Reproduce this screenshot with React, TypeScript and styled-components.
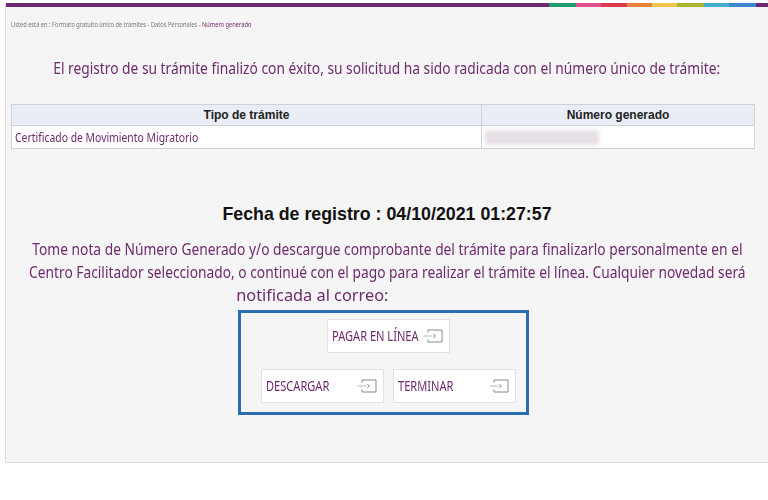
import * as React from 'react'
import styled, { createGlobalStyle } from 'styled-components'

const GlobalStyle = createGlobalStyle`
    html, body {
        margin: 0;
        padding: 0;
        background: #ffffff;
    }
`

// the site uses a condensed humanist face; Noto Sans squeezed horizontally is the closest we have
const humanist = `"Noto Sans", "Open Sans", sans-serif`
const purple = '#6e2a6e'

const stripes = [
    { color: '#1f9c6c', width: 27 },
    { color: '#e2508c', width: 25 },
    { color: '#dc3a4a', width: 26 },
    { color: '#e8813a', width: 25 },
    { color: '#f2c54a', width: 25 },
    { color: '#a9b52e', width: 27 },
    { color: '#45aecd', width: 25 },
    { color: '#3d87cf', width: 27 },
]

type ActionProps = { label: string }

function EnterIcon() {
    return (
        <svg width="20" height="16" viewBox="0 0 20 16" fill="none">
            <path d="M5 4.5V2H19V14H5V11.5" stroke="#8a8a8a" strokeWidth="1" />
            <path d="M0.5 8H9.5" stroke="#b5b5b5" strokeWidth="1" />
            <path d="M10.5 6.2L12.3 8L10.5 9.8" stroke="#777" strokeWidth="1" />
        </svg>
    )
}

function Action({ label }: ActionProps) {
    return (
        <ActionButton>
            <ActionLabel>
                <Squeeze $x={0.82}>{label}</Squeeze>
            </ActionLabel>
            <EnterIcon />
        </ActionButton>
    )
}

export default function App(): React.ReactElement {
    return (
        <>
            <GlobalStyle />
            <Page>
                <Panel>
                    <TopBar>
                        <BarFill />
                        {stripes.map((s) => (
                            <BarStripe key={s.color} style={{ width: s.width, background: s.color }} />
                        ))}
                        <BarEnd />
                    </TopBar>
                    <Breadcrumb>
                        <Squeeze $x={0.76}>
                            Usted está en : Formato gratuito único de trámites - Datos Personales -{' '}
                            <span>Número generado</span>
                        </Squeeze>
                    </Breadcrumb>
                    <Heading>
                        <Squeeze $x={0.81} $origin="center">
                            El registro de su trámite finalizó con éxito, su solicitud ha sido
                            radicada con el número único de trámite:
                        </Squeeze>
                    </Heading>
                    <ResultTable>
                        <thead>
                            <tr>
                                <th>Tipo de trámite</th>
                                <th>Número generado</th>
                            </tr>
                        </thead>
                        <tbody>
                            <tr>
                                <td>
                                    <Squeeze $x={0.8}>Certificado de Movimiento Migratorio</Squeeze>
                                </td>
                                <td>
                                    <Blurred />
                                </td>
                            </tr>
                        </tbody>
                    </ResultTable>
                    <DateLine>Fecha de registro : 04/10/2021 01:27:57</DateLine>
                    <Notice>
                        <Squeeze $x={0.81} $origin="center">
                            Tome nota de Número Generado y/o descargue comprobante del trámite para
                            finalizarlo personalmente en el
                        </Squeeze>
                        <Squeeze $x={0.81} $origin="center">
                            Centro Facilitador seleccionado, o continué con el pago para realizar el
                            trámite el línea. Cualquier novedad será
                        </Squeeze>
                        <LastLine $x={0.96} $origin="center">
                            notificada al correo:
                        </LastLine>
                    </Notice>
                    <ActionBox>
                        <ActionRow>
                            <Action label="PAGAR EN LÍNEA" />
                        </ActionRow>
                        <ActionRow>
                            <Action label="DESCARGAR" />
                            <Action label="TERMINAR" />
                        </ActionRow>
                    </ActionBox>
                </Panel>
            </Page>
        </>
    )
}

const Squeeze = styled.span<{ $x: number; $origin?: string }>`
    display: inline-block;
    white-space: nowrap;
    transform: scaleX(${(p) => p.$x});
    transform-origin: ${(p) => p.$origin ?? 'left center'};
`

const LastLine = styled(Squeeze)`
    margin-right: 150px;
`

const Page = styled.div`
    padding: 3px 0 0 5px;
    height: 500px;
    box-sizing: border-box;
    overflow: hidden;
`

const Panel = styled.div`
    background: #f5f5f5;
    border-left: 1px solid #dcdcdc;
    border-bottom: 1px solid #dcdcdc;
    height: 460px;
    box-sizing: border-box;
    display: flex;
    flex-direction: column;
`

const TopBar = styled.div`
    display: flex;
    height: 4px;
    flex-shrink: 0;
`

const BarFill = styled.div`
    flex: 1;
    background: #6b2a70;
`

const BarStripe = styled.div`
    flex-shrink: 0;
`

const BarEnd = styled.div`
    width: 12px;
    background: #6b2a70;
`

const Breadcrumb = styled.div`
    margin: 12px 0 0 5px;
    font-family: ${humanist};
    font-size: 7.5px;
    color: #777;

    span span {
        color: ${purple};
    }
`

const Heading = styled.h1`
    display: flex;
    justify-content: center;
    margin: 27px 0 0;
    font-family: ${humanist};
    font-weight: normal;
    font-size: 17px;
    color: ${purple};
`

const ResultTable = styled.table`
    margin: 25px 14px 0 5px;
    border-collapse: collapse;
    width: 744px;
    background: #fff;
    border: 1px solid #cfd3d8;

    th {
        background: #e9eef6;
        font-family: 'Liberation Sans', Arial, sans-serif;
        font-size: 12px;
        font-weight: bold;
        color: #222;
        height: 20px;
        padding: 0;
        border: 1px solid #cfd3d8;
    }

    th:first-child {
        width: 469px;
    }

    td {
        height: 22px;
        padding: 0 0 0 3px;
        font-family: ${humanist};
        font-size: 13px;
        color: ${purple};
        border: 1px solid #cfd3d8;
    }
`

const Blurred = styled.div`
    width: 114px;
    height: 15px;
    background: #e6dfe6;
    filter: blur(2px);
`

const DateLine = styled.div`
    margin-top: 55px;
    text-align: center;
    font-family: 'Liberation Sans', Arial, sans-serif;
    font-weight: bold;
    font-size: 17.8px;
    color: #111;
`

const Notice = styled.div`
    display: flex;
    flex-direction: column;
    align-items: center;
    margin-top: 12px;
    font-family: ${humanist};
    font-size: 17px;
    line-height: 23px;
    color: ${purple};
`

const ActionBox = styled.div`
    align-self: flex-start;
    margin: 4px 0 0 232px;
    width: 291px;
    height: 105px;
    box-sizing: border-box;
    border: 3px solid #2a6db5;
    display: flex;
    flex-direction: column;
    align-items: center;
    gap: 16px;
    padding: 6px 0 0 9px;
`

const ActionRow = styled.div`
    display: flex;
    gap: 9px;
`

const ActionButton = styled.div`
    display: flex;
    align-items: center;
    box-sizing: border-box;
    width: 123px;
    height: 34px;
    padding: 0 6px 0 4px;
    background: #fff;
    border: 1px solid #e2e2e2;
    font-family: ${humanist};
    font-size: 13.5px;
    color: ${purple};

    svg {
        flex-shrink: 0;
    }
`

const ActionLabel = styled.div`
    flex: 1;
    min-width: 0;
`
